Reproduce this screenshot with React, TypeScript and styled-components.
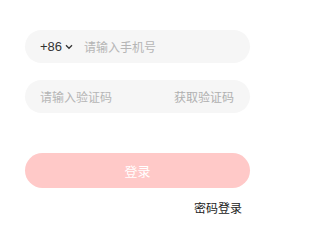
import React from "react";
import styled, { createGlobalStyle } from "styled-components";

const GlobalStyle = createGlobalStyle`
  html, body {
    margin: 0;
    padding: 0;
    background: #ffffff;
    font-family: "Noto Sans CJK SC", "Noto Sans", sans-serif;
  }
`;

const Page = styled.div`
  width: 275px;
  box-sizing: border-box;
  padding: 30px 25px 0 25px;
  display: flex;
  flex-direction: column;
`;

const Field = styled.div<{ $gap?: number }>`
  height: 33px;
  border-radius: 17px;
  background: #f6f6f6;
  display: flex;
  align-items: center;
  padding: 0 16px 0 15px;
  margin-bottom: ${(p) => p.$gap ?? 0}px;
`;

const Prefix = styled.div`
  display: flex;
  align-items: center;
  gap: 3px;
  color: #333333;
  font-size: 13px;
  font-family: "Liberation Sans", "Noto Sans CJK SC", sans-serif;
  margin-right: 11px;
`;

const Input = styled.input`
  flex: 1;
  min-width: 0;
  border: none;
  outline: none;
  background: transparent;
  font-size: 12px;
  font-family: "Noto Sans CJK SC", sans-serif;
  color: #333;
  padding: 0;
  &::placeholder {
    color: #b5b5b5;
  }
`;

const CodeLink = styled.span`
  font-size: 12px;
  color: #b0b0b0;
`;

const LoginButton = styled.button`
  height: 35px;
  border: none;
  border-radius: 18px;
  background: #ffc9c8;
  color: #ffffff;
  font-size: 13px;
  font-family: "Noto Sans CJK SC", sans-serif;
  padding: 0;
`;

const Footer = styled.div`
  display: flex;
  justify-content: flex-end;
  padding: 11px 8px 0 0;
  font-size: 12px;
  color: #222222;
`;

export default function App() {
  return (
    <>
      <GlobalStyle />
      <Page>
        <Field $gap={17}>
          <Prefix>
            +86
            <svg width="8" height="6" viewBox="0 0 8 6">
              <path d="M1 1.3 L4 4.3 L7 1.3" fill="none" stroke="#333" strokeWidth="1.3" />
            </svg>
          </Prefix>
          <Input placeholder="请输入手机号" />
        </Field>
        <Field $gap={40}>
          <Input placeholder="请输入验证码" />
          <CodeLink>获取验证码</CodeLink>
        </Field>
        <LoginButton>登录</LoginButton>
        <Footer>密码登录</Footer>
      </Page>
    </>
  );
}
